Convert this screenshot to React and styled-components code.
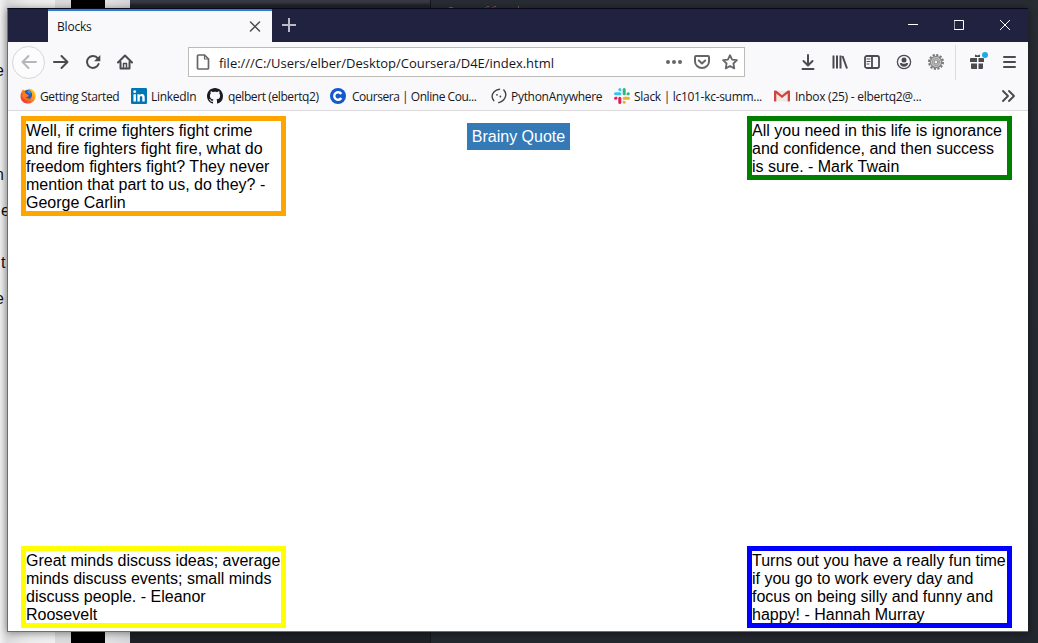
import React from "react";
import styled, { createGlobalStyle } from "styled-components";

const Global = createGlobalStyle`
  *{box-sizing:border-box}
  body{margin:0;overflow:hidden}
`;
const ui = `"Open Sans","Noto Sans",sans-serif`;

const Desktop = styled.div`
  position: relative; width: 1038px; height: 643px; overflow: hidden;
  display: flex; background: #23272e;
`;
const DocStrip = styled.div`
  width: 55px; background: linear-gradient(90deg,#f0f0f1 0,#dcdcde 7px,#ededee 30px,#f0f0f0 55px);
`;
const ScrollStrip = styled.div`width: ${p => p.$w}px; background: ${p => p.$c};`;
const Editor = styled.div`flex: 1; display: flex;`;
const EditorSide = styled.div`
  width: 301px; border-right: 1px solid #14161a;
  background: linear-gradient(180deg,#3a3b47 0,#32343f 3px,#212329 5px,#1f2127 100%);
`;
const EditorMain = styled.div`flex: 1; background: linear-gradient(180deg,#282c33,#23272e 100%);`;
const CodeTops = styled.svg`display: block; margin: 6px 0 0 15px;`;
const Letter = styled.span`
  position: absolute; left: ${p => p.$x}px; top: ${p => p.$y}px;
  font: 16px/18px "Liberation Sans",sans-serif; color: #111;
`;
const Window = styled.div`
  position: absolute; left: 7px; top: 8px; width: 1021px; height: 624px;
  display: flex; flex-direction: column; background: #fff;
  border: 1px solid #6c6d70; border-right: 0; border-top-color: #080a1c;
  box-shadow: 0 1px 8px rgba(0,0,0,.45);
`;
const TitleBar = styled.div`height: 33px; display: flex; background: #20223f; padding-left: 40px; flex: none;`;
const Tab = styled.div`
  width: 224px; border-top: 2px solid #2d7fd0; background: #f9f9fb; padding: 0 9px;
  display: flex; align-items: center; justify-content: space-between;
  font: 12px/16px ${ui}; color: #16161c;
`;
const TabLabel = styled.span`letter-spacing: -.2px;`;
const NewTab = styled.div`width: 34px; display: flex; align-items: center; justify-content: center; padding-bottom: 2px;`;
const Controls = styled.div`margin-left: auto; display: flex; width: 138px;`;
const Control = styled.div`width: 46px; display: flex; align-items: center; justify-content: center; padding-bottom: 1px;`;

const NavBar = styled.div`height: 40px; flex: none; display: flex; align-items: center; background: #f9f9fb; padding-left: 4px;`;
const Slot = styled.div`
  width: ${p => p.$w || 32}px; height: 40px; display: flex; align-items: center; justify-content: center; flex: none;
`;
const BackButton = styled.div`
  width: 33px; height: 33px; border: 1px solid #d6d6d8; border-radius: 50%; background: #fcfcfd;
  display: flex; align-items: center; justify-content: center;
`;
const UrlBar = styled.div`
  width: 557px; height: 30px; margin: 0 47px; border: 1px solid #bdbbb8; background: #fff;
  display: flex; align-items: center; padding: 0 6px 0 6px; flex: none;
`;
const UrlText = styled.span`
  flex: 1; margin-left: 8px; padding-top: 1px; font: 13px/18px ${ui}; color: #15151a; white-space: nowrap; letter-spacing: ${p => p.$ls}px;
`;
const UrlActions = styled.div`display: flex; gap: 12px; align-items: center;`;
const Separator = styled.div`width: 1px; height: 35px; background: #dcdcde; margin: 0 6px 0 3px;`;

const Bookmarks = styled.div`
  height: 29px; flex: none; display: flex; align-items: center; background: #f9f9fb;
  padding: 0 12px; border-bottom: 1px solid #dcd9dc;
`;
const Bookmark = styled.div`
  width: ${p => p.$w}px; display: flex; align-items: center; flex: none; gap: ${p => p.$gap}px;
  font: 12px/16px ${ui}; color: #16161c; white-space: nowrap; letter-spacing: ${p => p.$ls}px;
  svg { flex: none; }
  span { padding-top: 2px; }
`;
const Overflow = styled.div`margin-left: auto; display: flex;`;

const Page = styled.main`
  flex: 1; display: flex; flex-direction: column; justify-content: space-between;
  padding: 5px 16px 3px 13px; font: 16px/18px "Liberation Sans",Arial,sans-serif; color: #000;
`;
const QuoteRow = styled.div`display: flex; justify-content: space-between; align-items: flex-start;`;
const Quote = styled.div`
  width: 265px; height: ${p => p.$lines * 18 + 10}px; padding-top: 1px; border: 5px solid ${p => p.$color};
`;
const BrainyQuote = styled.div`
  width: 103px; height: 27px; margin: 7px 0 0 4px; background: #337ab7; color: #fff;
  line-height: 27px; text-align: center; white-space: nowrap;
`;

const Svg = ({ s = 16, children, ...p }) => (
  <svg width={s} height={s} viewBox="0 0 16 16" fill="none" stroke="#4a4a4f" strokeWidth="2" strokeLinecap="round" strokeLinejoin="round" {...p}>{children}</svg>
);

const Firefox = () => (
  <Svg stroke="none">
    <defs>
      <linearGradient id="fx" x1="1" y1="0" x2="0" y2="1"><stop offset="0" stopColor="#ffe226" /><stop offset=".45" stopColor="#ff8a1c" /><stop offset="1" stopColor="#e3183f" /></linearGradient>
    </defs>
    <path d="M2 3.2 3 1.4l1.4 1.2L9.2.8C13 1.2 15.6 4 15.6 8c0 4.400-3.400 7.600-7.600 7.600S.5 12.300.5 8.200C.5 6 1 4.400 2 3.200z" fill="url(#fx)" />
    <path d="M4.500 3.500C6 1.400 10 1.300 11.400 4.200c1.200 2 .9 5-1 6.200-2 1.200-4.400.5-5.300-1l2.400-.5 1.300-1.500-2.200-1z" fill="#2a57b5" />
    <path d="M7 3.300c1.500-1 3.300-.3 4 1.200L9.500 6z" fill="#27a5de" />
    <path d="M3 5.500c1-.6 2.400-.4 3 .4l2 .6-1 1.400-1.600.5c.3 1.600 2 2.300 3.800 1.800-1.600 2-5 1.800-6.200-.6-.7-1.400-.6-3 0-4.100z" fill="#ff7a1a" />
  </Svg>
);
const LinkedIn = () => (
  <Svg stroke="none"><rect width="16" height="16" rx="1.2" fill="#0077b5" />
    <circle cx="3.700" cy="3.700" r="1.400" fill="#fff" /><path d="M2.500 6.200h2.400v7.300H2.500zM6.400 6.200h2.300v1c.5-.8 1.300-1.200 2.300-1.200 2 0 2.700 1.300 2.700 3.400v4.100h-2.400V9.900c0-1-.2-1.900-1.200-1.900S8.800 8.800 8.800 9.900v3.600H6.400z" fill="#fff" />
  </Svg>
);
const GitHub = () => (
  <Svg stroke="none"><path fill="#1b1b1f" d="M8 0C3.580 0 0 3.580 0 8c0 3.540 2.290 6.530 5.470 7.590.4.070.55-.17.55-.38 0-.19-.01-.82-.01-1.490-2.010.37-2.530-.49-2.690-.94-.09-.23-.48-.94-.82-1.130-.28-.15-.68-.52-.01-.53.63-.01 1.080.58 1.230.82.720 1.210 1.870.87 2.330.66.070-.52.280-.87.510-1.070-1.780-.2-3.640-.89-3.640-3.950 0-.87.310-1.590.82-2.150-.08-.2-.36-1.020.08-2.120 0 0 .67-.21 2.200.82.640-.18 1.320-.27 2-.27s1.360.09 2 .27c1.530-1.040 2.200-.82 2.200-.82.440 1.100.160 1.920.080 2.120.51.560.82 1.270.82 2.150 0 3.070-1.870 3.750-3.650 3.950.290.250.540.730.540 1.480 0 1.070-.01 1.930-.01 2.200 0 .21.150.46.550.38A8.010 8.010 0 0 0 16 8c0-4.420-3.580-8-8-8z" /></Svg>
);
const Coursera = () => (
  <Svg><circle cx="8" cy="8" r="8" fill="#1557cc" stroke="none" /><path d="M11.300 6A3.800 3.800 0 1 0 11.300 10" stroke="#fff" strokeWidth="2.400" strokeLinecap="butt" /></Svg>
);
const PythonAnywhere = () => (
  <Svg strokeWidth="1.400" stroke="#444"><path d="M8.500 1.200C4 1.800 .6 5.500 1.200 9.200c.2 1.500 1 2.700 1.600 3.500M12.800 2c2 2 2.400 5.200 1.200 7.800-1.200 2.500-3.500 4.200-6.300 4.800" /><circle cx="6" cy="6.800" r=".9" fill="#444" stroke="none" /><circle cx="9.400" cy="8.500" r=".9" fill="#444" stroke="none" /></Svg>
);
const Slack = () => (
  <Svg stroke="none">
    <g fill="#36c5f0"><rect x="0" y="4.200" width="7.300" height="3" rx="1.500" /><path d="M4.300 1.600a1.500 1.500 0 0 1 3 0v1.600H5.800a1.500 1.500 0 0 1-1.500-1.600z" /></g>
    <g fill="#2eb67d"><rect x="8.700" y="0" width="3" height="7.200" rx="1.500" /><path d="M12.600 7.200V5.700a1.600 1.500 0 1 1 1.600 1.500z" /></g>
    <g fill="#ecb22e"><rect x="8.700" y="8.700" width="7.300" height="3" rx="1.500" /><path d="M8.700 12.700h1.500a1.500 1.500 0 1 1-1.500 1.500z" /></g>
    <g fill="#e01e5a"><rect x="4.300" y="8.700" width="3" height="7.300" rx="1.500" /><path d="M3.300 8.700v1.500a1.600 1.500 0 1 1-1.600-1.500z" /></g>
  </Svg>
);
const Gmail = () => (
  <Svg stroke="none"><path d="M2 3h12v10.500H2z" fill="#efe9e8" /><path d="M1 2.500h1.200L8 7.200l5.800-4.700H15c.6 0 1 .4 1 1v9c0 .6-.4 1-1 1h-1.300V5.600L8 10 2.300 5.600v7.900H1c-.6 0-1-.4-1-1v-9c0-.6.400-1 1-1z" fill="#d2433a" /></Svg>
);

const Gear = () => (
  <Svg>
    <circle cx="8" cy="8" r="7" stroke="#777" strokeWidth="2" strokeDasharray="2.200 1.465" strokeLinecap="butt" />
    <circle cx="8" cy="8" r="5.700" fill="#c4c4c4" stroke="#858585" strokeWidth="1.200" />
    <circle cx="8" cy="8" r="3.600" stroke="#9a9a9a" strokeWidth="1" />
    <circle cx="8" cy="8" r="1.900" fill="#f4f4f4" stroke="#777" strokeWidth=".8" />
  </Svg>
);

const bookmarks = [
  ["Getting Started", Firefox, 111, 4, -0.37],
  ["LinkedIn", LinkedIn, 76, 4, -0.3],
  ["qelbert (elbertq2)", GitHub, 123, 5, -0.4],
  ["Coursera | Online Cou...", Coursera, 161, 6, -0.46],
  ["PythonAnywhere", PythonAnywhere, 123, 4, -0.3],
  ["Slack | lc101-kc-summ...", Slack, 160, 4, -0.3],
  ["Inbox (25) - elbertq2@...", Gmail, 150, 5, -0.26],
];
const letters = [["e", -5, 62], ["n", -5, 166], ["e", 1, 202], ["t", 1, 254], ["e", -5, 290]];

export default function App() {
  return (
    <Desktop>
      <Global />
      <DocStrip />
      <ScrollStrip $w={16} $c="#dcdcdd" />
      <ScrollStrip $w={34} $c="#000" />
      <ScrollStrip $w={25} $c="linear-gradient(90deg,#e4e4e5,#d8d8da)" />
      <Editor>
        <EditorSide />
        <EditorMain>
          <CodeTops width="80" height="3" viewBox="0 0 80 3" fill="none" stroke="#80565a" strokeWidth="1">
            <path d="M3 1.500h4M41 .5h2M48 .5h2M40 1v2M47 1v2M72.500 0v3" />
          </CodeTops>
        </EditorMain>
      </Editor>
      {letters.map(([c, x, y]) => <Letter key={y} $x={x} $y={y}>{c}</Letter>)}
      <Window>
        <TitleBar>
          <Tab>
            <TabLabel>Blocks</TabLabel>
            <Svg s={16} strokeWidth="1.500"><path d="M3.500 3l9 9M12.500 3l-9 9" /></Svg>
          </Tab>
          <NewTab><Svg stroke="#b9bac6" strokeWidth="2" strokeLinecap="butt"><path d="M8 1v14M1 8h14" /></Svg></NewTab>
          <Controls>
            <Control><Svg s={10} viewBox="0 0 10 10" stroke="#fff" strokeWidth="1" strokeLinecap="butt"><path d="M0 4.500h10" /></Svg></Control>
            <Control><Svg s={10} viewBox="0 0 10 10" stroke="#fff" strokeWidth="1" strokeLinejoin="miter"><path d="M.5.5h9v9h-9z" /></Svg></Control>
            <Control><Svg s={10} viewBox="0 0 10 10" stroke="#fff" strokeWidth="1"><path d="M0 0l10 10M10 0L0 10" /></Svg></Control>
          </Controls>
        </TitleBar>
        <NavBar>
          <Slot $w={33}><BackButton><Svg stroke="#b6b6ba"><path d="M15 8H1.500M7.500 2l-6 6 6 6" /></Svg></BackButton></Slot>
          <Slot><Svg><path d="M1 8h13.500M8.500 2l6 6-6 6" /></Svg></Slot>
          <Slot><Svg><path d="M12.800 4.300A6 6 0 1 0 13.600 10" /><path d="M15.300 1v6.300H9z" fill="#4a4a4f" stroke="none" /></Svg></Slot>
          <Slot><Svg><path d="M1 8.500 8 1.500l7 7M3.500 8v6.500h9V8" /><path d="M6.500 14.500V9.500h3v5" strokeWidth="1.500" /></Svg></Slot>
          <UrlBar>
            <Svg><path d="M3.500 1h6l4 4v9a1 1 0 0 1-1 1h-9a1 1 0 0 1-1-1V2a1 1 0 0 1 1-1z" strokeWidth="1.700" stroke="#66666a" /><path d="M9.500 1v4h4" strokeWidth="1.200" stroke="#66666a" /></Svg>
            <UrlText $ls={-0.02}>file:///C:/Users/elber/Desktop/Coursera/D4E/index.html</UrlText>
            <UrlActions>
              <Svg fill="#66666a" stroke="none"><circle cx="2" cy="8" r="2" /><circle cx="8" cy="8" r="2" /><circle cx="14" cy="8" r="2" /></Svg>
              <Svg stroke="#66666a"><path d="M2 2h12a1 1 0 0 1 1 1v4.500a7 6.500 0 0 1-14 0V3a1 1 0 0 1 1-1z" /><path d="M4.800 6.500 8 9.500l3.200-3" /></Svg>
              <Svg stroke="#66666a" strokeWidth="1.800"><path d="M8 1.200l2.100 4.400 4.800.6-3.500 3.300.9 4.900L8 12l-4.300 2.400.9-4.900L1.100 6.200l4.800-.6z" /></Svg>
            </UrlActions>
          </UrlBar>
          <Slot><Svg><path d="M8 1v10M3.500 7 8 11.500 12.500 7M2.500 15h11" /></Svg></Slot>
          <Slot><Svg strokeLinecap="butt"><path d="M1.500 1.500v13M5 1.500v13M8.500 1.500v13M10.500 2l4.500 12.500" /></Svg></Slot>
          <Slot><Svg strokeWidth="1.800"><rect x="1" y="2" width="14" height="12" rx="1.800" /><path d="M8 2v12" /><path d="M3 5h3M3 7.500h3M3 10h2" strokeWidth="1" /></Svg></Slot>
          <Slot><Svg strokeWidth="1.300"><circle cx="8" cy="8" r="6.600" /><circle cx="8" cy="6" r="2.500" fill="#4a4a4f" stroke="none" /><path d="M3.800 9.500c1.200-.8 2-.4 2.500-.1 1 .5 2.400.5 3.400 0 .5-.3 1.500-.6 2.500.1-.4 1.800-2 3.200-4.200 3.200S4.200 11.300 3.800 9.500z" fill="#4a4a4f" stroke="none" /></Svg></Slot>
          <Slot><Gear /></Slot>
          <Separator />
          <Slot $w={31}>
            <Svg s={20} viewBox="0 0 20 20" stroke="none" fill="#4a4a4f">
              <path d="M3 6h6v4H2V7a1 1 0 0 1 1-1zM10.500 6H15a1 1 0 0 1 1 1v3h-5.500zM3 11.500h6V17H4a1 1 0 0 1-1-1zM10.500 11.500H15V16a1 1 0 0 1-1 1h-3.500zM7 2.500l2.500 1 2.500-1V5H7z" />
              <circle cx="17" cy="3" r="3" fill="#17aee8" />
            </Svg>
          </Slot>
          <Slot $w={31}><Svg><path d="M3 3h11M3 8h11M3 13h11" /></Svg></Slot>
        </NavBar>
        <Bookmarks>
          {bookmarks.map(([t, Icon, w, gap, ls]) => (
            <Bookmark key={t} $w={w} $gap={gap} $ls={ls}><Icon /><span>{t}</span></Bookmark>
          ))}
          <Overflow><Svg><path d="M3 3l5 5-5 5M9 3l5 5-5 5" strokeWidth="1.900" /></Svg></Overflow>
        </Bookmarks>
        <Page>
          <QuoteRow>
            <Quote $color="orange" $lines={5}>Well, if crime fighters fight crime and fire fighters fight fire, what do freedom fighters fight? They never mention that part to us, do they? - George Carlin</Quote>
            <BrainyQuote>Brainy Quote</BrainyQuote>
            <Quote $color="green" $lines={3}>All you need in this life is ignorance and confidence, and then success is sure. - Mark Twain</Quote>
          </QuoteRow>
          <QuoteRow>
            <Quote $color="yellow" $lines={4}>Great minds discuss ideas; average minds discuss events; small minds discuss people. - Eleanor Roosevelt</Quote>
            <Quote $color="blue" $lines={4}>Turns out you have a really fun time if you go to work every day and focus on being silly and funny and happy! - Hannah Murray</Quote>
          </QuoteRow>
        </Page>
      </Window>
    </Desktop>
  );
}
